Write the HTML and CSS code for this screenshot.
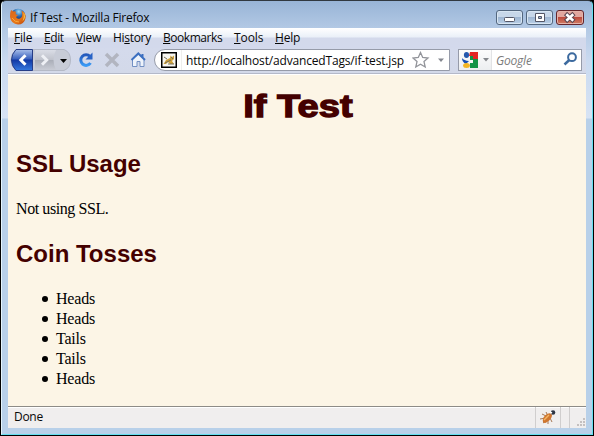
FILE: index.html
```html
<!DOCTYPE html>
<html lang="en">
<head>
<meta charset="utf-8">
<title>If Test - Mozilla Firefox</title>
<link rel="stylesheet" href="styles.css">
</head>
<body>
<div class="window">
  <header class="titlebar">
    <svg class="firefox" width="18" height="18" viewBox="0 0 18 18">
      <defs><radialGradient id="globe" cx=".55" cy=".2"><stop offset="0" stop-color="#9fdcf5"/><stop offset=".6" stop-color="#2f6fb5"/><stop offset="1" stop-color="#1c3c80"/></radialGradient>
      <linearGradient id="fox" x2="1" y2="1"><stop offset="0" stop-color="#d9661c"/><stop offset=".6" stop-color="#e87818"/><stop offset="1" stop-color="#b8400c"/></linearGradient></defs>
      <circle cx="9" cy="8" r="7.3" fill="url(#globe)"/>
      <path d="M2 2 L4.500 3.500 Q6 3 7 4 L6.500 6 L9 7.300 L7 9 Q8 11.500 11 10.500 Q14 9 13 5 L12.500 2.500 Q17.500 5 16.500 10.500 Q15 16.500 9 16.500 Q2 16 1 9 Q.8 5 2 2Z" fill="url(#fox)"/>
      <path d="M14.500 4 Q18 9 13.500 13.500 Q15.500 9 14.500 4Z" fill="#f9c440"/>
      <path d="M3 10 Q6 14.500 10 14" fill="none" stroke="#f6a83e"/>
    </svg>
    <span class="title">If Test - Mozilla Firefox</span>
    <div class="controls">
      <span class="control"><svg width="26" height="13"><rect x="7.500" y="6.500" width="10" height="4" rx="1" fill="#fff" stroke="#535666"/></svg></span>
      <span class="control"><svg width="26" height="13"><path d="M8.500 2.500h9v8h-9zM11.500 5.500h3v2h-3z" fill="#fff" fill-rule="evenodd" stroke="#535666"/></svg></span>
      <span class="control close"><svg width="26" height="13"><path d="M8.500 2.500l8.500 8M17 2.500l-8.500 8" stroke="#5b4650" stroke-width="4.500"/><path d="M9.300 3.200l7 6.600M16.300 3.200l-7 6.600" stroke="#fff" stroke-width="2.600"/></svg></span>
    </div>
  </header>
  <nav class="menu">
    <span class="m-file"><u>F</u>ile</span><span class="m-edit"><u>E</u>dit</span><span class="m-view"><u>V</u>iew</span><span class="m-history">Hi<u>s</u>tory</span><span class="m-bookmarks"><u>B</u>ookmarks</span><span class="m-tools"><u>T</u>ools</span><span class="m-help"><u>H</u>elp</span>
  </nav>
  <div class="toolbar">
    <svg class="nav" width="146" height="24" viewBox="0 0 146 24">
      <defs>
        <linearGradient id="blue" x2="0" y2="1"><stop offset="0" stop-color="#a9bfe9"/><stop offset=".45" stop-color="#3860be"/><stop offset=".5" stop-color="#1138a4"/><stop offset="1" stop-color="#3579df"/></linearGradient>
        <linearGradient id="gray" x2="0" y2="1"><stop offset="0" stop-color="#dadde6"/><stop offset=".48" stop-color="#c0c3cc"/><stop offset=".5" stop-color="#a9adb7"/><stop offset="1" stop-color="#c9ccd5"/></linearGradient>
        <linearGradient id="reload" x2="0" y2="1"><stop offset="0" stop-color="#2459bc"/><stop offset="1" stop-color="#399af5"/></linearGradient>
      </defs>
      <path d="M8 .5H56Q62.500 3 62.500 11Q62.500 19 56 21.500H8Q3 17 3 11Q3 5 8 .5Z" fill="#c8ccd7" stroke="#b4b9c6"/>
      <path d="M27 1H48Q43 11 48 21H27Z" fill="url(#gray)"/>
      <path d="M8 .5H24.500V21.500H8Q3.500 17 3.500 11Q3.500 5 8 .5Z" fill="url(#blue)" stroke="#263d87"/>
      <path d="M17.500 6.200L12.800 11L17.500 15.800" fill="none" stroke="#fff" stroke-width="3"/>
      <path d="M34 6.200L38.700 11L34 15.800" fill="none" stroke="#eef0f5" stroke-width="3"/>
      <path d="M52 10h7l-3.500 4z" fill="#050505"/>
      <path d="M82.500 14A5.300 5.300 0 1 1 82 7.500" fill="none" stroke="url(#reload)" stroke-width="3"/>
      <path d="M84.500 3.500V10.500H77.500Z" fill="#2863c6"/>
      <path d="M98 5L110 17M110 5L98 17" stroke="#b2b5c0" stroke-width="3.500"/>
      <path d="M124.500 10V17.500H129V12.500H132V17.500H136V10L130.500 5Z" fill="#eef3fb" stroke="#7390c3"/>
      <path d="M123.500 11L130.300 4.500L137 11M134.500 5V8" fill="none" stroke="#3c6fc0" stroke-width="2"/>
    </svg>
    <div class="address">
      <svg class="favicon" width="16" height="16"><rect x=".75" y=".75" width="14.500" height="14.500" fill="#f7f6f1" stroke="#000" stroke-width="1.500"/><path d="M2.500 12L5 8L9 6L9.500 3.500L11 5L13 3.500V7L11 9L13 12H9L7 10L5 12Z" fill="#d0a13a"/><path d="M3 5L6 7M4 11L10 8M10 5L12 7M7 12h6" stroke="#75705e"/></svg>
      <span class="divider"></span>
      <span class="url">http://localhost/advancedTags/if-test.jsp</span>
      <svg class="star" width="36" height="18"><path d="M8.500 1.500L10.700 6.400L16 7L12 10.600L13.200 16L8.500 13.200L3.800 16L5 10.600L1 7L6.300 6.400Z" fill="#fff" stroke="#92949a" stroke-width="1.300"/><path d="M26 7.500h6l-3 3.500z" fill="#858890"/></svg>
    </div>
    <div class="search">
      <div class="engine"><svg width="32" height="20"><path d="M9 2h8v16H9V13h3V10H9z" fill="#129447"/><path d="M9 2h8v7h-5V6H8z" fill="#e32525"/><ellipse cx="5.500" cy="5" rx="2.600" ry="3" fill="#2458ad"/><path d="M1 8Q3 10.500 8 11L5 14Q1 12 1 8Z" fill="#1550b3"/><ellipse cx="5.500" cy="15.500" rx="3.400" ry="2.500" fill="#f2b422"/><path d="M22 8h6l-3 3.500z" fill="#85888c"/></svg></div>
      <span class="placeholder">Google</span>
      <svg class="magnifier" width="15" height="15"><circle cx="9" cy="5.200" r="3.900" fill="#fff" stroke="#3c6a9f" stroke-width="2"/><path d="M6.300 8L1.500 12.500" stroke="#3c6a9f" stroke-width="2.500"/></svg>
    </div>
  </div>
  <main class="page">
    <h1><span>If Test</span></h1>
    <h2>SSL Usage</h2>
    <p>Not using SSL.</p>
    <h2>Coin Tosses</h2>
    <ul><li>Heads</li><li>Heads</li><li>Tails</li><li>Tails</li><li>Heads</li></ul>
  </main>
  <footer class="status">
    <span class="done">Done</span>
    <div class="bug"><svg width="19" height="18"><path d="M3 6l4 2M1 11l6-1M4 15l4-3M7 4l2 4M9 16v-5M13 14l-2-4" stroke="#a67753"/><path d="M4 14Q3 9 8 6Q12 4 13 7Q13 11 8 14Q6 16 4 14Z" fill="#cf762f"/><path d="M5 12l5-5" stroke="#f5b463" stroke-width="1.500"/><circle cx="14" cy="4.500" r="2.300" fill="#2d3442"/><path d="M11 4l2 1" stroke="#fff" stroke-width="1.500"/></svg></div>
    <div class="cell"></div>
    <div class="grip"><svg width="10" height="10"><path d="M7 1h2M4 4h2M7 4h2M1 7h2M4 7h2M7 7h2" stroke="#c4c0c0" stroke-width="2"/></svg></div>
  </footer>
</div>
</body>
</html>
```
FILE: styles.css
```css
* { box-sizing: border-box; }
body { margin: 0; background: #000; overflow: hidden; }
svg { display: block; flex: none; }
.window {
  width: 592px; height: 435px; margin-left: 1px;
  padding: 0 6px 6px;
  border: 1px solid #64dff0; border-top-color: #303840; border-left-color: #e5f5fd;
  border-radius: 5px 5px 0 0;
  background: linear-gradient(#98b4d7 0, #b4cae5 29px, #cadaf0 60px, #d7e3f4 117px, #b8d0e9 118px);
  display: flex; flex-direction: column;
  font: 12px/16px "Open Sans", "Noto Sans", sans-serif; color: #080808;
}
.titlebar { height: 27px; flex: none; display: flex; align-items: flex-start; }
.firefox { margin: 7px 3px 0 1px; }
.title { margin-top: 9px; width: 200px; letter-spacing: -.22px; white-space: nowrap; }
.controls { margin: 9px 2px 0 auto; display: flex; gap: 3px; }
.control {
  width: 27px; height: 15px; border: 1px solid #53677f; border-radius: 3px;
  background: linear-gradient(#c7d7e9 0 45%, #9eb6d2 50%, #bad0e7);
  box-shadow: inset 0 0 0 1px #d7e5f2;
}
.close { width: 28px; border-color: #65252b; background: linear-gradient(#e1a69e 0 45%, #bd4b3e 50%, #d07e65); box-shadow: inset 0 0 0 1px #e4b3aa; }
.menu { height: 20px; flex: none; background: linear-gradient(#fff, #eaf0f8 9px, #d3d9eb 10px, #d3d9ec); padding: 2px 6px; display: flex; gap: 12px; }
.menu span { white-space: nowrap; }
.menu u { text-underline-offset: 1px; text-decoration-skip-ink: none; text-decoration-thickness: 1px; }
.m-file { width: 18px; letter-spacing: -.2px; }
.m-edit { width: 20px; letter-spacing: -.4px; }
.m-view { width: 25px; letter-spacing: -.3px; }
.m-history { width: 38px; letter-spacing: -.3px; }
.m-bookmarks { width: 59px; letter-spacing: -.45px; }
.m-tools { width: 29px; letter-spacing: -.1px; }
.m-help { width: 26px; letter-spacing: -.2px; }
.toolbar { height: 26px; flex: none; background: linear-gradient(#d4daec, #d3d9e9); border-bottom: 1px solid #b4b9c9; padding: 1px 4px 0 0; display: flex; }
.address {
  width: 296px; height: 22px; border: 1px solid #969ba9; border-radius: 11px 0 0 11px;
  background: #fff; display: flex; align-items: center; padding-left: 6px;
}
.favicon { margin-right: 4px; }
.divider { width: 1px; height: 20px; background: #eeeeec; }
.url { width: 230px; padding: 1px 0 0 4px; letter-spacing: -.17px; white-space: nowrap; }
.search { width: 124px; height: 22px; margin-left: auto; border: 1px solid #969ba9; background: #fff; display: flex; align-items: center; }
.engine { width: 33px; height: 20px; padding-left: 2px; background: linear-gradient(#fcfcfc, #eceef0); border-right: 1px solid #e2e3e5; }
.placeholder { margin: 1px 0 0 4px; color: #7b7b7b; font-style: italic; letter-spacing: -.2px; }
.magnifier { margin: 0 3px 2px auto; }
.page { flex: 1; min-height: 0; background: #fcf5e6; border-top: 1px solid #fff; padding: 8px; color: #000; font: 16px/20px "Liberation Serif", serif; }
h1, h2 { color: #440000; font-family: "Liberation Sans", sans-serif; font-weight: bold; }
h1 { margin: 0; font-size: 32px; line-height: 45px; text-align: center; }
h1 span { display: inline-block; transform: translate(1px, .5px) scaleX(1.19); -webkit-text-stroke: 1.3px #440000; }
h2 { margin: 21px 0; font-size: 24px; line-height: 28px; }
p { margin: 0; letter-spacing: -.42px; }
ul { margin: 0; padding-left: 40px; list-style: none; letter-spacing: -.2px; }
li { display: flex; align-items: center; }
li::before { content: ""; width: 6px; height: 6px; margin: 0 8px 0 -14px; border-radius: 50%; background: #000; }
.page h2:first-of-type { margin-top: 22px; }
.status { height: 22px; flex: none; background: #f0eeee; border-top: 1px solid #8d8b87; box-shadow: inset 0 1px #fff; display: flex; }
.done { margin: 2px auto 0 6px; letter-spacing: -.3px; }
.bug { width: 26px; padding: 1px 3px; border-left: 1px solid #d0cece; border-right: 1px solid #d0cece; }
.cell { width: 9px; border-right: 1px solid #d0cece; }
.grip { width: 16px; padding: 11px 0 0 6px; }
```
